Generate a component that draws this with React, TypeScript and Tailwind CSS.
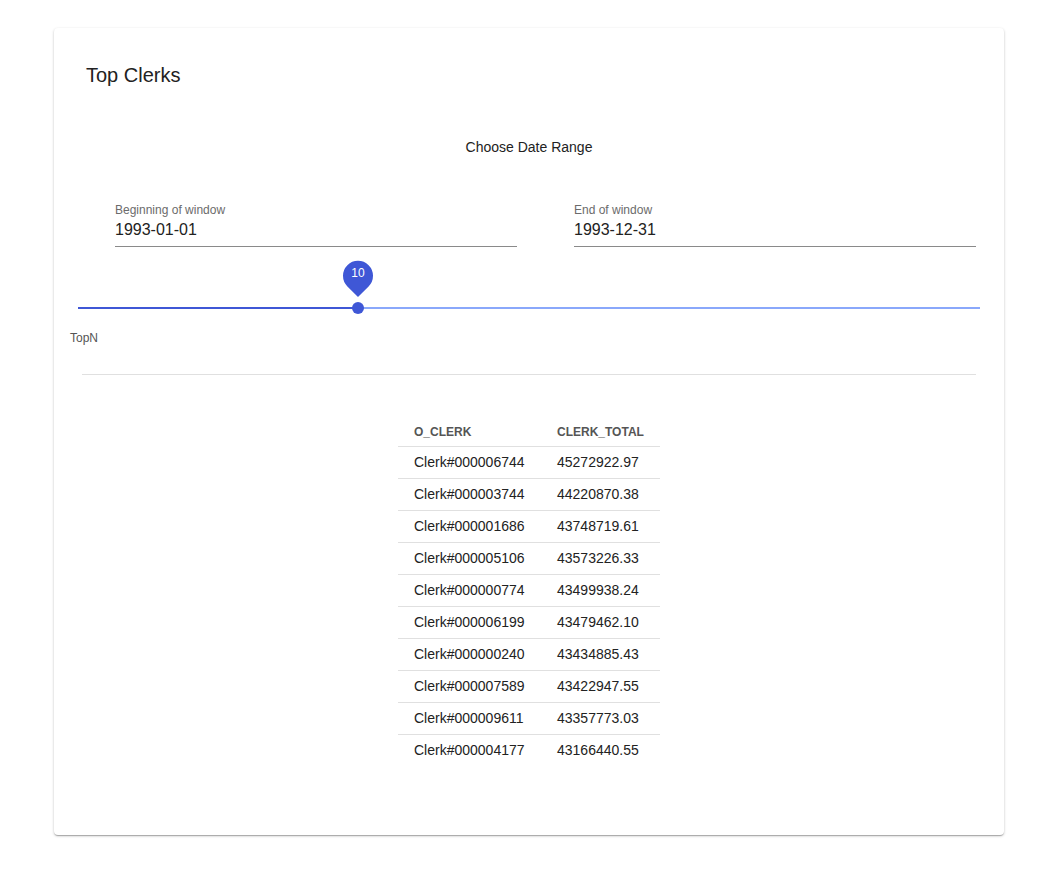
import React from "react";

const rows: [string, string][] = [
  ["Clerk#000006744", "45272922.97"],
  ["Clerk#000003744", "44220870.38"],
  ["Clerk#000001686", "43748719.61"],
  ["Clerk#000005106", "43573226.33"],
  ["Clerk#000000774", "43499938.24"],
  ["Clerk#000006199", "43479462.10"],
  ["Clerk#000000240", "43434885.43"],
  ["Clerk#000007589", "43422947.55"],
  ["Clerk#000009611", "43357773.03"],
  ["Clerk#000004177", "43166440.55"],
];

function Field({ label, value }: { label: string; value: string }) {
  return (
    <div className="w-[402px] border-b border-[#8a8a8a]">
      <div className="text-[12px] leading-[14px] text-[#6b6b6b]">{label}</div>
      <div className="mt-[3px] pb-[7px] text-[16px] leading-[19px] text-[#222]">{value}</div>
    </div>
  );
}

export default function App() {
  const pct = ((10 - 1) / (30 - 1)) * 100;
  return (
    <div
      className="min-h-[888px] w-[1054px] bg-white pt-[28px]"
      style={{ fontFamily: '"Liberation Sans", Arial, Helvetica, sans-serif' }}
    >
      <div className="ml-[54px] h-[807px] w-[950px] rounded-[4px] bg-white shadow-[0_1px_3px_0_rgba(0,0,0,0.2),0_1px_1px_0_rgba(0,0,0,0.14),0_2px_1px_-1px_rgba(0,0,0,0.12)]">
        <div className="pl-[32px] pt-[35px] text-[20px] leading-[24px] text-[#222]">Top Clerks</div>
        <div className="mt-[52px] text-center text-[14px] leading-[16px] text-[#222]">Choose Date Range</div>
        <div className="mt-[48px] flex gap-[57px] pl-[61px]">
          <Field label="Beginning of window" value="1993-01-01" />
          <Field label="End of window" value="1993-12-31" />
        </div>
        <div className="relative ml-[24px] mt-[60px] h-[2px] w-[902px] bg-[#8aa8fb]">
          <div className="absolute left-0 top-0 h-[2px] bg-[#3f57d6]" style={{ width: `${pct}%` }} />
          <div
            className="absolute top-[-5px] h-[12px] w-[12px] -translate-x-1/2 rounded-full bg-[#3f57d6]"
            style={{ left: `${pct}%` }}
          />
          <div className="absolute top-[-47px] -translate-x-1/2" style={{ left: `${pct}%` }}>
            <div className="relative h-[40px] w-[32px]">
              <svg width="32" height="40" viewBox="0 0 32 40" className="absolute left-0 top-0">
                <path d="M16 37 L5.4 26.4 A15 15 0 1 1 26.6 26.4 Z" fill="#3f57d6" />
              </svg>
              <div className="absolute left-0 top-[6px] w-[32px] text-center text-[12px] leading-[14px] text-white">10</div>
            </div>
          </div>
        </div>
        <div className="ml-[16px] mt-[22px] text-[12px] leading-[14px] text-[#555]">TopN</div>
        <div className="ml-[28px] mt-[29px] h-px w-[894px] bg-[#e0e0e0]" />
        <div className="mt-[39px] flex justify-center">
          <table className="w-[262px] min-w-[262px] table-fixed border-collapse text-left">
            <thead>
              <tr className="border-b border-[#e0e0e0]">
                <th className="h-[32px] w-[143px] pl-[16px] pt-[4px] text-[12px] font-bold text-[#555]">O_CLERK</th>
                <th className="h-[32px] w-[119px] pl-[16px] pt-[4px] text-[12px] font-bold text-[#555]">CLERK_TOTAL</th>
              </tr>
            </thead>
            <tbody>
              {rows.map(([c, t], i) => (
                <tr key={c} className={i < rows.length - 1 ? "border-b border-[#e0e0e0]" : ""}>
                  <td className="h-[32px] pl-[16px] text-[14px] text-[#222]">{c}</td>
                  <td className="h-[32px] pl-[16px] text-[14px] text-[#222]">{t}</td>
                </tr>
              ))}
            </tbody>
          </table>
        </div>
      </div>
    </div>
  );
}
